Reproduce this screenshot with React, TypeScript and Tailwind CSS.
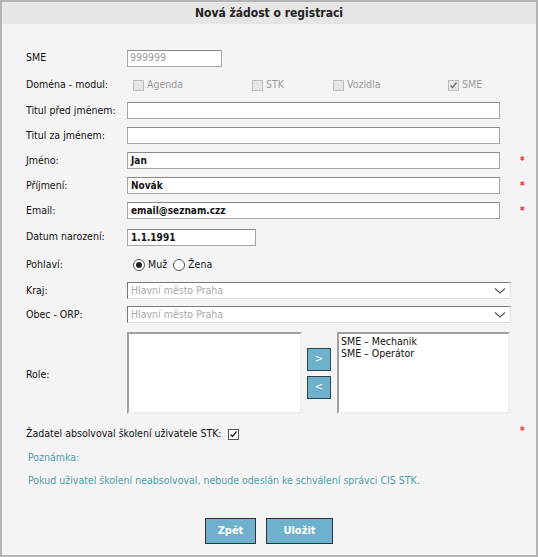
import type { ReactNode } from 'react'

const font = "font-['DejaVu_Sans_Condensed','Liberation_Sans',sans-serif]"

function Req() {
  return <span className="ml-auto w-[8px] text-[10px] font-bold leading-none text-[#ff1a1a]">*</span>
}

function Row({ label, h, children, req }: { label: string; h: string; children?: ReactNode; req?: boolean }) {
  return (
    <div className={`flex items-center ${h}`}>
      <div className="w-[101px] shrink-0 text-[#111]">{label}</div>
      {children}
      {req && <Req />}
    </div>
  )
}

function TextBox({ value, w = 'w-[373px]' }: { value?: string; w?: string }) {
  return (
    <div className={`${w} flex h-[17px] items-center border border-[#a6a6a6] border-t-[#8a8a8a] bg-white px-[3px] text-[10px] font-bold text-[#111]`}>
      {value}
    </div>
  )
}

function DisabledCheck({ label, checked, w }: { label: string; checked?: boolean; w?: string }) {
  return (
    <div className={`flex items-center gap-[3px] ${w ?? ''}`}>
      <span className="flex h-[11px] w-[11px] items-center justify-center border border-[#bdbdbd] bg-[#e6e6e6]">
        {checked && (
          <svg width="9" height="9" viewBox="0 0 9 9">
            <path d="M1.5 4.5 L3.5 6.5 L7.5 1.5" fill="none" stroke="#6b6b6b" strokeWidth="1.4" />
          </svg>
        )}
      </span>
      <span className="text-[#9a9a9a]">{label}</span>
    </div>
  )
}

function Radio({ label, on }: { label: string; on?: boolean }) {
  return (
    <div className="flex items-center gap-[3px]">
      <span className="flex h-[12px] w-[12px] items-center justify-center rounded-full border border-[#555] bg-white">
        {on && <span className="h-[6px] w-[6px] rounded-full bg-[#222]" />}
      </span>
      <span className="text-[#111]">{label}</span>
    </div>
  )
}

function SelectBox({ value }: { value: string }) {
  return (
    <div className="flex h-[17px] w-[384px] items-center border border-[#e0e0e0] border-t-[#7a7a7a] border-l-[#7a7a7a] bg-white pl-[3px] pr-[4px] text-[#a8a8a8]">
      <span>{value}</span>
      <svg className="ml-auto" width="12" height="8" viewBox="0 0 12 8">
        <path d="M1 1.5 L6 6 L11 1.5" fill="none" stroke="#555" strokeWidth="1.3" />
      </svg>
    </div>
  )
}

function MoveBtn({ children }: { children: ReactNode }) {
  return (
    <div className="flex h-[23px] w-[24px] items-center justify-center border border-[#2e4650] bg-[#6eb1cc] text-[11px] text-white">
      {children}
    </div>
  )
}

export default function App() {
  return (
    <div className={`${font} h-[557px] w-[538px] border-2 border-[#b4b4b4] bg-[#f4f4f4] text-[10.5px]`}>
      <div className="flex h-[22px] items-center justify-center bg-[#e6e6e6] text-[12px] font-bold text-[#222]">
        Nová žádost o registraci
      </div>

      <div className="flex flex-col pl-[24px] pr-[8px] pt-[20px]">
        <Row label="SME" h="h-[28px]">
          <div className="flex h-[17px] w-[95px] items-center border border-[#a6a6a6] border-t-[#8a8a8a] bg-white px-[2px] text-[#9a9a9a]">
            999999
          </div>
        </Row>
        <Row label="Doména - modul:" h="h-[26px]">
          <div className="ml-[6px] flex items-center">
            <DisabledCheck label="Agenda" w="w-[119px]" />
            <DisabledCheck label="STK" w="w-[81px]" />
            <DisabledCheck label="Vozidla" w="w-[115px]" />
            <DisabledCheck label="SME" checked />
          </div>
        </Row>
        <Row label="Titul před jménem:" h="h-[25px]">
          <TextBox />
        </Row>
        <Row label="Titul za jménem:" h="h-[25px]">
          <TextBox />
        </Row>
        <Row label="Jméno:" h="h-[25px]" req>
          <TextBox value="Jan" />
        </Row>
        <Row label="Příjmení:" h="h-[25px]" req>
          <TextBox value="Novák" />
        </Row>
        <Row label="Email:" h="h-[25px]" req>
          <TextBox value="email@seznam.czz" />
        </Row>
        <Row label="Datum narození:" h="h-[28px]">
          <TextBox value="1.1.1991" w="w-[129px]" />
        </Row>
        <Row label="Pohlaví:" h="h-[28px]">
          <div className="ml-[6px] flex items-center gap-[6px]">
            <Radio label="Muž" on />
            <Radio label="Žena" />
          </div>
        </Row>
        <Row label="Kraj:" h="h-[23px]">
          <SelectBox value="Hlavní město Praha" />
        </Row>
        <Row label="Obec - ORP:" h="h-[25px]">
          <SelectBox value="Hlavní město Praha" />
        </Row>

        <div className="mt-[5px] flex h-[82px] items-center">
          <div className="w-[101px] shrink-0 pt-[4px] text-[#111]">Role:</div>
          <div className="h-full w-[175px] border-2 border-[#f0f0f0] border-t-[#a0a0a0] border-l-[#a0a0a0] bg-white" />
          <div className="flex w-[35px] flex-col items-center gap-[5px] pr-[1px]">
            <MoveBtn>&gt;</MoveBtn>
            <MoveBtn>&lt;</MoveBtn>
          </div>
          <div className="h-full w-[173px] border-2 border-[#f0f0f0] border-t-[#a0a0a0] border-l-[#a0a0a0] bg-white px-[2px] pt-[1px] text-[10.5px] leading-[12px] text-[#111]">
            <div>SME – Mechanik</div>
            <div>SME – Operátor</div>
          </div>
        </div>

        <div className="mt-[8px] flex h-[24px] items-center">
          <span className="text-[#111]">Žadatel absolvoval školení uživatele STK:</span>
          <span className="ml-[6px] flex h-[11px] w-[11px] items-center justify-center border border-[#555] bg-white">
            <svg width="9" height="9" viewBox="0 0 9 9">
              <path d="M1.5 4.5 L3.5 6.5 L7.5 1.5" fill="none" stroke="#222" strokeWidth="1.3" />
            </svg>
          </span>
          <span className="ml-auto -mt-[6px] w-[8px] text-[10px] font-bold leading-none text-[#ff1a1a]">*</span>
        </div>
        <div className="flex h-[24px] items-center pl-[2px] text-[#4f9fa9]">Poznámka:</div>
        <div className="flex h-[22px] items-center pl-[2px] text-[#4f9fa9]">
          Pokud uživatel školení neabsolvoval, nebude odeslán ke schválení správci CIS STK.
        </div>

        <div className="mt-[26px] flex justify-center gap-[10px] pr-[16px]">
          <button className="h-[26px] w-[51px] border border-[#333] bg-[#6eb1cc] text-[11px] font-bold text-white">
            Zpět
          </button>
          <button className="h-[26px] w-[67px] border border-[#333] bg-[#6eb1cc] text-[11px] font-bold text-white">
            Uložit
          </button>
        </div>
      </div>
    </div>
  )
}
